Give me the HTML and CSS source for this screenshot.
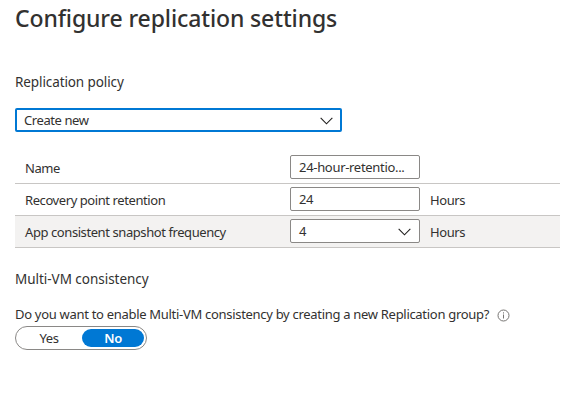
FILE: index.html
```
<!DOCTYPE html>
<html lang="en">
<head>
<meta charset="utf-8">
<title>Configure replication settings</title>
<link rel="stylesheet" href="styles.css">
</head>
<body>
<main class="page">
  <h1 class="title">Configure replication settings</h1>
  <h2 class="section policy-title">Replication policy</h2>
  <div class="field select select-active">
    <span class="create">Create new</span>
    <svg class="chevron" viewBox="0 0 14 8"><path d="M.7 .7 7 7 13.3 .7"/></svg>
  </div>
  <div class="settings">
    <div class="row">
      <span class="label">Name</span>
      <div class="field"><span class="policy">24-hour-retentio...</span></div>
    </div>
    <div class="row">
      <span class="label">Recovery point retention</span>
      <div class="field"><span>24</span></div>
      <span class="unit">Hours</span>
    </div>
    <div class="row row-shaded">
      <span class="label">App consistent snapshot frequency</span>
      <div class="field select"><span>4</span>
        <svg class="chevron" viewBox="0 0 14 8"><path d="M.7 .7 7 7 13.3 .7"/></svg>
      </div>
      <span class="unit">Hours</span>
    </div>
  </div>
  <h2 class="section multi-title">Multi-VM consistency</h2>
  <div class="question">
    <span class="prompt">Do you want to enable Multi-VM consistency by creating a new Replication group?</span>
    <svg class="info" viewBox="0 0 13 13"><circle cx="6.5" cy="6.5" r="5.5"/><path d="M6.5 5.5v4M6.5 3.3v1.2"/></svg>
  </div>
  <div class="toggle">
    <span class="option yes">Yes</span>
    <span class="option selected">No</span>
  </div>
</main>
</body>
</html>
```
FILE: styles.css
```
* { box-sizing: border-box; }
body {
  margin: 0;
  background: #fff;
  color: #323130;
  font: 13px/18px "Segoe UI", "Noto Sans", "Open Sans", sans-serif;
  letter-spacing: -0.42px;
  white-space: nowrap;
}
.page { display: flex; flex-direction: column; align-items: flex-start; padding: 3px 0 0 15px; }
.title { margin: 0; font-size: 23px; line-height: 30px; font-weight: 550; letter-spacing: -0.12px; }
.section { margin: 0; font-size: 13.5px; line-height: 20px; font-weight: 400; letter-spacing: -0.03px; }
.policy-title { margin-top: 39px; letter-spacing: -0.1px; }
.field {
  display: flex;
  align-items: center;
  width: 130px;
  height: 24px;
  padding: 0 8px;
  border: 1px solid #8a8886;
  border-radius: 2px;
  background: #fff;
}
.field span { line-height: 18px; }
.select { justify-content: space-between; }
.select-active { width: 327px; margin-top: 16px; padding: 0 7px; border: 2px solid #0078d4; }
.policy { letter-spacing: -0.31px; }
.chevron { width: 13px; height: 8px; margin-top: 1px; fill: none; stroke: #201f1e; stroke-width: 1.2; }
.settings { width: 545px; margin-top: 20px; }
.row {
  display: grid;
  grid-template-columns: 275px 130px 1fr;
  align-items: start;
  height: 32px;
  padding-top: 3px;
  border-bottom: 1px solid #c8c6c4;
}
.row-shaded { background: #f3f2f1; }
.label, .unit { padding: 4px 0 0 10px; }
.multi-title { margin-top: 21px; }
.question { display: flex; align-items: center; gap: 8px; margin-top: 16px; }
.prompt { letter-spacing: -0.3px; }
.info { width: 13px; height: 13px; margin-top: 2px; fill: none; stroke: #767472; stroke-width: 1; }
.toggle {
  display: flex;
  align-items: center;
  width: 132px;
  height: 24px;
  margin-top: 3px;
  padding: 2px;
  border: 1px solid #8a8886;
  border-radius: 12px;
}
.option { width: 64px; height: 18px; border-radius: 9px; line-height: 19px; text-align: center; }
.yes { padding-right: 2px; }
.selected { width: 62px; background: #0078d4; color: #fff; font-weight: 600; }
```
